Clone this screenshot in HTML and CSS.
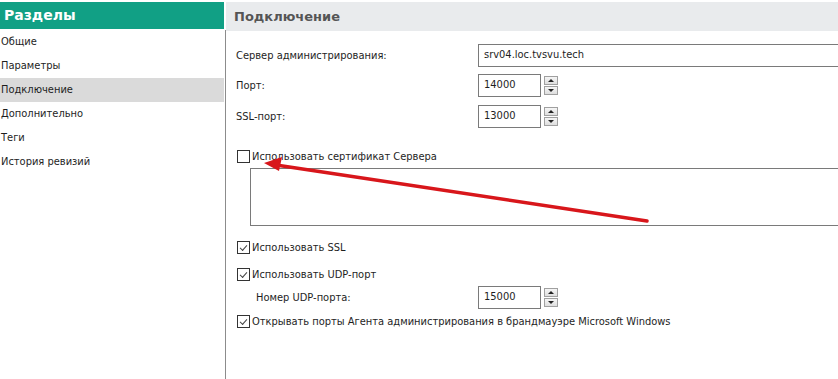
FILE: index.html
```
<!DOCTYPE html>
<html lang="ru">
<head>
  <meta charset="UTF-8">
  <title>Свойства: Подключение</title>
  <link rel="stylesheet" href="styles.css">
</head>
<body>
  <div class="window">
    <div class="sidebar">
      <h2 class="sidebar-title">Разделы</h2>
      <ul class="sections">
        <li>Общие</li>
        <li>Параметры</li>
        <li class="active">Подключение</li>
        <li>Дополнительно</li>
        <li>Теги</li>
        <li>История ревизий</li>
      </ul>
    </div>

    <div class="panel">
      <h2 class="panel-title">Подключение</h2>

      <div class="form">
        <div class="row row-server">
          <label class="field-label">Сервер администрирования:</label>
          <div class="text-input wide">srv04.loc.tvsvu.tech</div>
        </div>

        <div class="row row-port">
          <label class="field-label">Порт:</label>
          <div class="spin">
            <div class="text-input short">14000</div>
            <div class="spin-buttons"><span class="up"></span><span class="down"></span></div>
          </div>
        </div>

        <div class="row row-ssl">
          <label class="field-label">SSL-порт:</label>
          <div class="spin">
            <div class="text-input short">13000</div>
            <div class="spin-buttons"><span class="up"></span><span class="down"></span></div>
          </div>
        </div>

        <div class="check check-cert">
          <span class="box"></span>
          <span>Использовать сертификат Сервера</span>
        </div>
        <div class="cert-area"></div>

        <div class="check check-ssl">
          <span class="box checked"></span>
          <span>Использовать SSL</span>
        </div>

        <div class="check check-udp">
          <span class="box checked"></span>
          <span>Использовать UDP-порт</span>
        </div>

        <div class="row row-udp">
          <label class="field-label indent">Номер UDP-порта:</label>
          <div class="spin">
            <div class="text-input short">15000</div>
            <div class="spin-buttons"><span class="up"></span><span class="down"></span></div>
          </div>
        </div>

        <div class="check check-fw">
          <span class="box checked"></span>
          <span>Открывать порты Агента администрирования в брандмауэре Microsoft Windows</span>
        </div>
      </div>
    </div>

    <!-- red annotation arrow drawn over the screenshot -->
    <svg class="arrow" width="838" height="379" viewBox="0 0 838 379">
      <line x1="647" y1="221" x2="276" y2="165" stroke="#d8161b" stroke-width="3.5" stroke-linecap="round"/>
      <polygon points="264,163 282,157 279,171" fill="#d8161b"/>
    </svg>
  </div>
</body>
</html>
```

FILE: styles.css
```
body {
  margin: 0;
  background: #fff;
  font-family: "DejaVu Sans Condensed", "DejaVu Sans", sans-serif;
  font-stretch: condensed;
  font-size: 11px;
  color: #1e1e1e;
  overflow: hidden;
}

.window {
  position: relative;
  display: flex;
  height: 379px;
  padding-top: 2px;
  box-sizing: border-box;
}

/* left column */
.sidebar {
  width: 224px;
  flex-shrink: 0;
}
.sidebar-title {
  margin: 0;
  height: 27px;
  line-height: 27px;
  padding-left: 4px;
  background: #11a085;
  color: #fff;
  font-family: "DejaVu Sans", sans-serif;
  font-stretch: normal;
  font-size: 14px;
  font-weight: bold;
}
.sections {
  list-style: none;
  margin: 1px 0 0;
  padding: 0;
}
.sections li {
  height: 24px;
  line-height: 24px;
  padding-left: 1px;
}
.sections li.active {
  background: #dadada;
}

/* right panel */
.panel {
  flex: 1;
  margin-left: 2px;
  position: relative;
}
.panel::before {
  content: '';
  position: absolute;
  left: -1px;
  top: 28px;
  bottom: 0;
  width: 1px;
  background: #8c8c8c;
}
.panel-title {
  margin: 0;
  height: 29px;
  line-height: 29px;
  padding-left: 8px;
  background: #e9ebed;
  color: #555;
  font-family: "DejaVu Sans", sans-serif;
  font-stretch: normal;
  font-size: 13px;
  font-weight: bold;
}

.form {
  display: flex;
  flex-direction: column;
  padding: 13px 0 0 10px;
}
.row {
  display: flex;
  align-items: center;
  height: 23px;
}
.row-port {
  margin-top: 7px;
}
.row-ssl {
  margin-top: 8px;
}
.field-label {
  width: 242px;
  flex-shrink: 0;
}
.field-label.indent {
  padding-left: 20px;
  width: 222px;
}
.text-input {
  height: 21px;
  line-height: 20px;
  border: 1px solid #7a7a7a;
  padding-left: 5px;
  box-sizing: content-box;
}
.text-input.wide {
  flex: 1;
  border-right: none;
}
.text-input.short {
  width: 56px;
}

.spin {
  display: flex;
  align-items: center;
}
.spin-buttons {
  display: flex;
  flex-direction: column;
  gap: 1px;
  margin-left: 3px;
}
.spin-buttons span {
  width: 12px;
  height: 7px;
  border: 1px solid #a0a0a0;
  background: linear-gradient(#f6f6f6, #dedede);
  position: relative;
}
.spin-buttons span::after {
  content: '';
  position: absolute;
  left: 3px;
  border-left: 3px solid transparent;
  border-right: 3px solid transparent;
}
.spin-buttons .up::after {
  top: 2px;
  border-bottom: 3px solid #222;
}
.spin-buttons .down::after {
  top: 2px;
  border-top: 3px solid #222;
}

/* checkboxes */
.check {
  display: flex;
  align-items: center;
  gap: 2px;
  height: 14px;
  padding-left: 1px;
}
.box {
  width: 11px;
  height: 11px;
  border: 1px solid #333;
  position: relative;
  flex-shrink: 0;
}
.box.checked::after {
  content: '';
  position: absolute;
  left: 2px;
  top: 1px;
  width: 6px;
  height: 3px;
  border-left: 1px solid #444;
  border-bottom: 1px solid #444;
  transform: translate(0, 2px) rotate(-48deg);
}
.check-cert {
  margin-top: 21px;
}
.cert-area {
  height: 56px;
  margin: 5px 0 0 14px;
  border: 1px solid #7a7a7a;
  border-right: none;
}
.check-ssl {
  margin-top: 14px;
}
.check-udp {
  margin-top: 13px;
}
.row-udp {
  margin-top: 5px;
  height: 22px;
}
.check-fw {
  margin-top: 6px;
}

.arrow {
  position: absolute;
  left: 0;
  top: 0;
  pointer-events: none;
}
```
